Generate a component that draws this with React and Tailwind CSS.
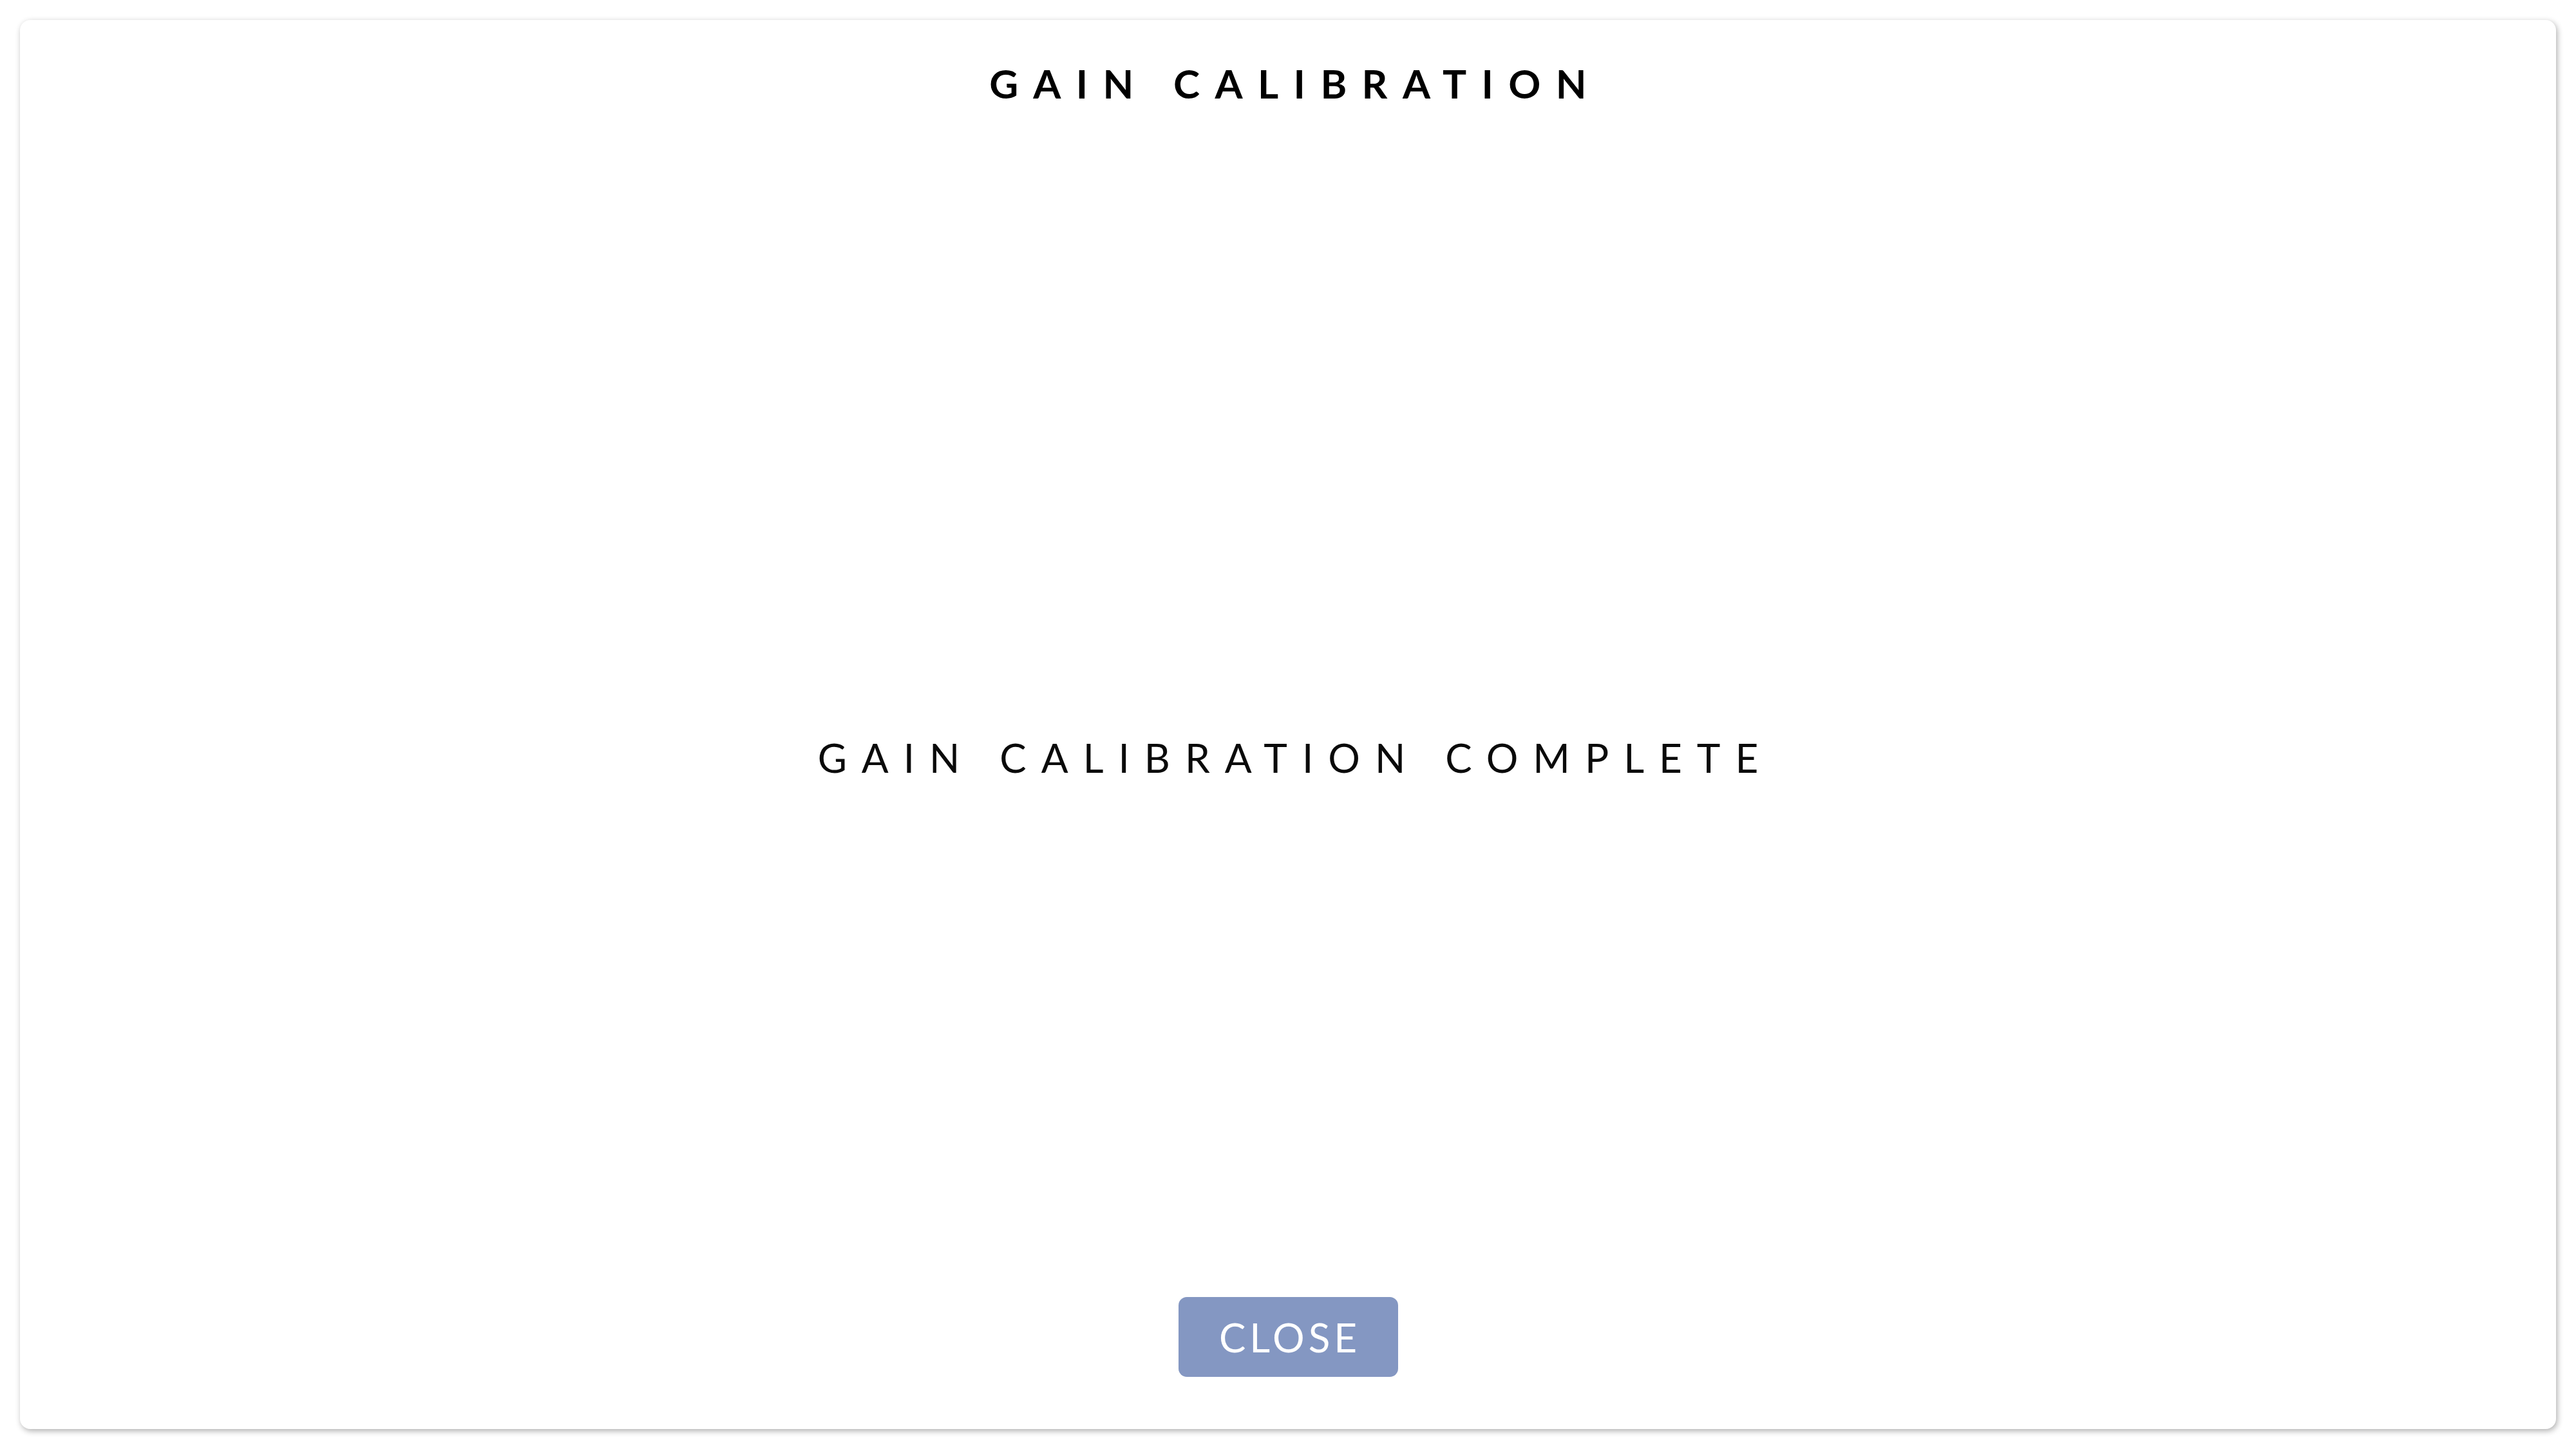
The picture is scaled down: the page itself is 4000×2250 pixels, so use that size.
import React from 'react';

const font = { fontFamily: 'Lato, "Noto Sans", sans-serif' };

export default function App() {
  return (
    <div className="w-[4000px] h-[2250px] bg-white p-[31px]" style={font}>
      <div className="h-full bg-white rounded-[16px] shadow-[2px_3px_10px_rgba(0,0,0,0.32)] flex flex-col items-center">
        {/* Header */}
        <h1 className="mt-[67px] text-[62px] leading-[62px] font-bold text-black tracking-[23.4px] indent-[23.4px]">
          GAIN CALIBRATION
        </h1>

        {/* Status message */}
        <p className="mt-[985px] text-[62px] leading-[62px] font-normal text-[#0a0a0a] tracking-[23px] indent-[23px]">
          GAIN CALIBRATION COMPLETE
        </p>

        {/* Close */}
        <button className="mt-[807px] w-[341px] h-[124px] rounded-[13px] bg-[#8497c2] text-white text-[62px] leading-none font-normal tracking-[6px] indent-[6px]">
          CLOSE
        </button>
      </div>
    </div>
  );
}
